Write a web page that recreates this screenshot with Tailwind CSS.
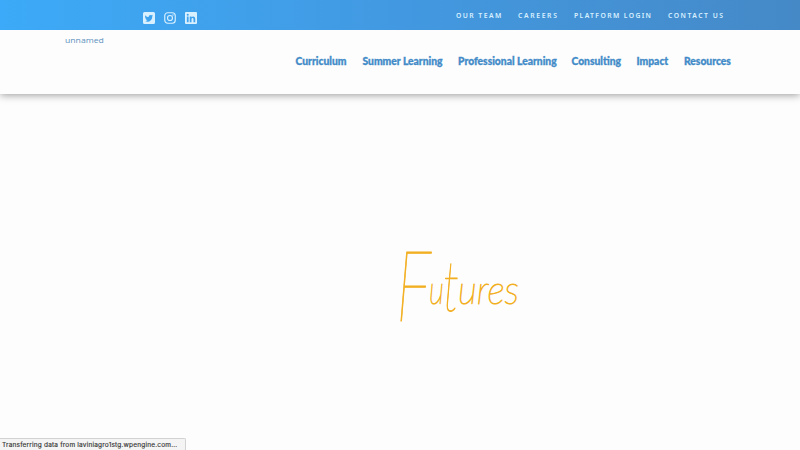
<!DOCTYPE html>
<html lang="en">
<head>
<meta charset="utf-8">
<title>Futures</title>
<script src="https://cdn.jsdelivr.net/npm/@tailwindcss/browser@4"></script>
</head>
<body class="h-[450px] w-[800px] overflow-hidden bg-[#fdfdfd] font-['Lato',sans-serif]">
<div class="flex h-full flex-col">
  <div class="z-10 flex h-[30px] shrink-0 justify-between bg-linear-to-r from-[#3caaf8] via-[#4299e1] to-[#4589c7] pr-[76px] pl-[143px] text-[#d8f0ff]">
    <div class="flex gap-[9px] pt-[12px]">
      <svg class="size-3" viewBox="0 0 24 24" fill="currentColor"><path fill-rule="evenodd" d="M3 0h18a3 3 0 0 1 3 3v18a3 3 0 0 1-3 3H3a3 3 0 0 1-3-3V3a3 3 0 0 1 3-3Zm17 7-2 .5 1.5-2-2.3.9a4 4 0 0 0-6 3.7C7.900 10 5.800 8.300 4.500 6.300c-1 2-.2 3.900 1.200 4.800L4.300 10.700c0 1.800 1.200 3.200 2.900 3.600H5.600c.5 1.400 1.700 2.300 3.300 2.400A7 7 0 0 1 3.500 18.200C10.500 22.200 18.700 17.500 18.400 9Z"/></svg>
      <svg class="size-3" viewBox="0 0 24 24" fill="none" stroke="currentColor" stroke-width="2.300"><rect x="1.500" y="1.500" width="21" height="21" rx="6"/><circle cx="12" cy="12" r="5"/><circle cx="18" cy="6" r="1.300" fill="currentColor" stroke="none"/></svg>
      <svg class="size-3" viewBox="0 0 24 24" fill="currentColor"><path fill-rule="evenodd" d="M2 0h20a2 2 0 0 1 2 2v20a2 2 0 0 1-2 2H2a2 2 0 0 1-2-2V2a2 2 0 0 1 2-2Zm1.700 9v11.500h3.500V9Zm1.800-5.700a2 2 0 1 0 0 4.100 2 2 0 0 0 0-4.100ZM9.500 9v11.500H13v-5.700c0-3.700 4-3.800 4 0v5.700h3.500v-6.500c0-6-5.500-6.200-7.500-3.300V9Z"/></svg>
    </div>
    <nav class="flex gap-[14px] pt-[11px] font-['Noto_Sans',sans-serif] text-[6.800px] leading-[10px] font-semibold whitespace-nowrap">
      <a class="w-[48px] tracking-[1.450px]">OUR TEAM</a>
      <a class="w-[42px] tracking-[1.650px]">CAREERS</a>
      <a class="w-[80px] tracking-[1.380px]">PLATFORM LOGIN</a>
      <a class="w-[56px] tracking-[1.500px]">CONTACT US</a>
    </nav>
  </div>
  <header class="flex h-16 shrink-0 justify-between bg-[#fdfdfd] pr-[68px] pl-[65px] text-[#428bc8] shadow-[0_1px_8px_rgba(0,0,0,0.4)]">
    <a class="pt-[4px] font-['Open_Sans',sans-serif] text-[8px] leading-[11px] text-[#5c91bd]"><span class="inline-block origin-left scale-x-[1.080]">unnamed</span></a>
    <nav class="flex pt-[24px] text-[10.300px] leading-[14px] font-black whitespace-nowrap [-webkit-text-stroke:0.300px_#428bc8]">
      <a class="w-[67px]">Curriculum</a><a class="w-[95.500px]">Summer Learning</a><a class="w-[113.500px]">Professional Learning</a><a class="w-[65px]">Consulting</a><a class="w-[47.500px]">Impact</a><a class="w-[48px]">Resources</a>
    </nav>
  </header>
  <main class="flex grow flex-col justify-between">
    <h1 class="mt-[146px] ml-[390px] h-[96px] w-[140px]">
      <svg class="h-full w-full overflow-visible font-['Lato',sans-serif] italic" viewBox="390 240 140 96" fill="#f2af22" stroke="#f2af22" stroke-linejoin="round" stroke-width="1" role="img" aria-label="Futures"><text font-weight="100"><tspan x="396" y="321" font-size="98" textLength="35" lengthAdjust="spacingAndGlyphs">F</tspan><tspan x="429" y="304" font-size="40" textLength="15" lengthAdjust="spacingAndGlyphs">u</tspan><tspan x="443" y="311" font-size="70" textLength="16" lengthAdjust="spacingAndGlyphs">t</tspan><tspan x="458" y="304" font-size="40" textLength="61" lengthAdjust="spacingAndGlyphs">ures</tspan></text></svg>
    </h1>
    <div class="flex h-[12px] w-[186px] items-center rounded-tr-[2px] border-t border-r border-[#d2d2d2] bg-[#f4f4f4] pl-[2px] font-['Inter',sans-serif] text-[6.500px] leading-[10px] tracking-[0.190px] whitespace-nowrap text-[#333] [-webkit-text-stroke:0.150px_#333]"><span>Transferring data from laviniagro1stg.wpengine.com...</span></div>
  </main>
</div>
</body>
</html>
